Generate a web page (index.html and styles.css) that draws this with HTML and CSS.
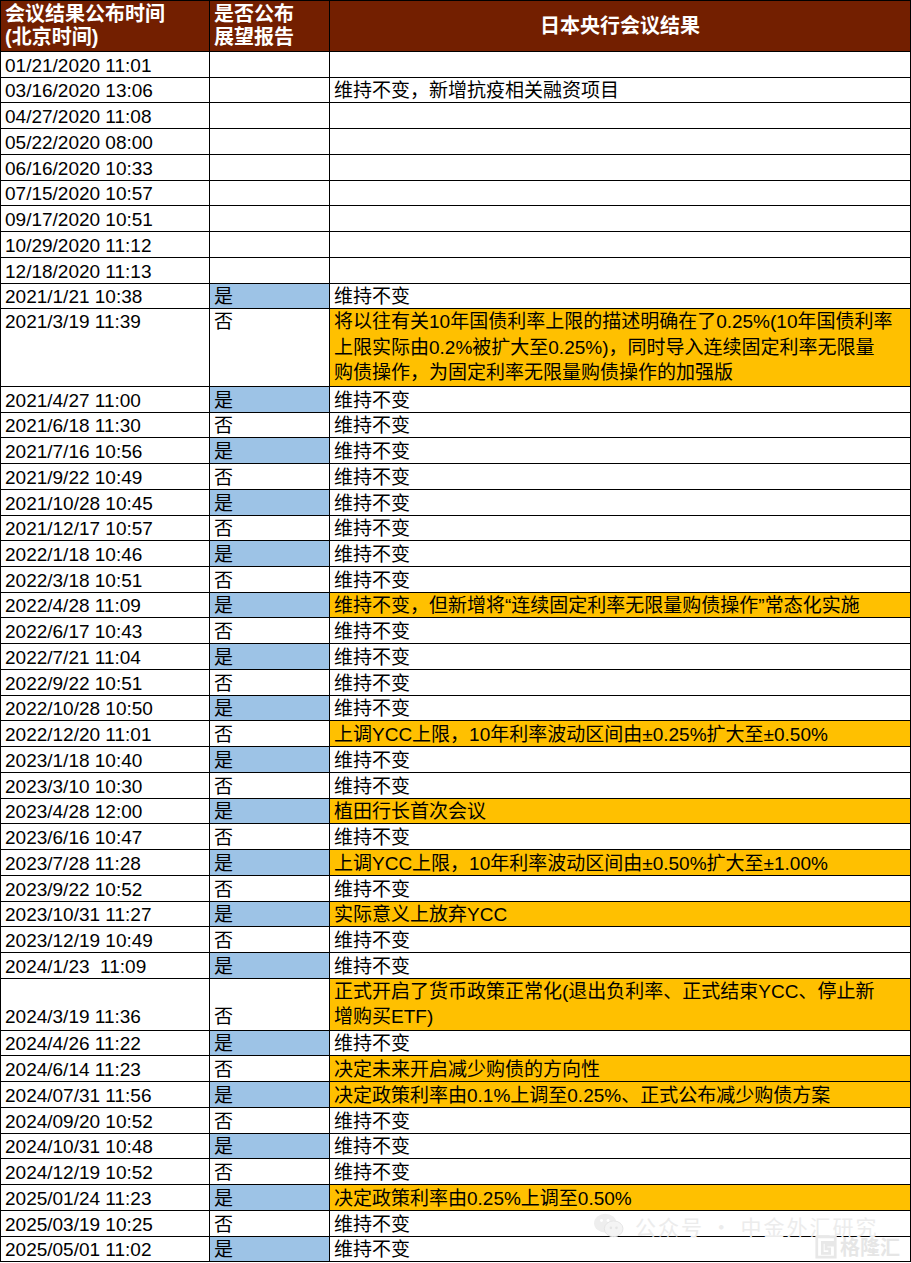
FILE: index.html
```html
<!DOCTYPE html>
<html lang="zh-CN">
<head>
<meta charset="utf-8">
<title>日本央行会议结果</title>
<link rel="stylesheet" href="styles.css">
</head>
<body>
<div class="wrap">
<table class="sheet">
  <colgroup><col class="c1"><col class="c2"><col class="c3"></colgroup>
  <thead>
    <tr class="head">
      <th class="left">会议结果公布时间<br>(北京时间)</th>
      <th class="left">是否公布<br>展望报告</th>
      <th class="center">日本央行会议结果</th>
    </tr>
  </thead>
  <tbody>
    <tr><td>01/21/2020 11:01</td><td></td><td></td></tr>
    <tr><td>03/16/2020 13:06</td><td></td><td>维持不变，新增抗疫相关融资项目</td></tr>
    <tr><td>04/27/2020 11:08</td><td></td><td></td></tr>
    <tr><td>05/22/2020 08:00</td><td></td><td></td></tr>
    <tr><td>06/16/2020 10:33</td><td></td><td></td></tr>
    <tr><td>07/15/2020 10:57</td><td></td><td></td></tr>
    <tr><td>09/17/2020 10:51</td><td></td><td></td></tr>
    <tr><td>10/29/2020 11:12</td><td></td><td></td></tr>
    <tr><td>12/18/2020 11:13</td><td></td><td></td></tr>
    <tr><td>2021/1/21 10:38</td><td class="yes">是</td><td>维持不变</td></tr>
    <tr class="tall3"><td class="top">2021/3/19 11:39</td><td class="top">否</td><td class="hl">将以往有关10年国债利率上限的描述明确在了0.25%(10年国债利率<br>上限实际由0.2%被扩大至0.25%)，同时导入连续固定利率无限量<br>购债操作，为固定利率无限量购债操作的加强版</td></tr>
    <tr><td>2021/4/27 11:00</td><td class="yes">是</td><td>维持不变</td></tr>
    <tr><td>2021/6/18 11:30</td><td>否</td><td>维持不变</td></tr>
    <tr><td>2021/7/16 10:56</td><td class="yes">是</td><td>维持不变</td></tr>
    <tr><td>2021/9/22 10:49</td><td>否</td><td>维持不变</td></tr>
    <tr><td>2021/10/28 10:45</td><td class="yes">是</td><td>维持不变</td></tr>
    <tr><td>2021/12/17 10:57</td><td>否</td><td>维持不变</td></tr>
    <tr><td>2022/1/18 10:46</td><td class="yes">是</td><td>维持不变</td></tr>
    <tr><td>2022/3/18 10:51</td><td>否</td><td>维持不变</td></tr>
    <tr><td>2022/4/28 11:09</td><td class="yes">是</td><td class="hl">维持不变，但新增将“连续固定利率无限量购债操作”常态化实施</td></tr>
    <tr><td>2022/6/17 10:43</td><td>否</td><td>维持不变</td></tr>
    <tr><td>2022/7/21 11:04</td><td class="yes">是</td><td>维持不变</td></tr>
    <tr><td>2022/9/22 10:51</td><td>否</td><td>维持不变</td></tr>
    <tr><td>2022/10/28 10:50</td><td class="yes">是</td><td>维持不变</td></tr>
    <tr><td>2022/12/20 11:01</td><td>否</td><td class="hl">上调YCC上限，10年利率波动区间由±0.25%扩大至±0.50%</td></tr>
    <tr><td>2023/1/18 10:40</td><td class="yes">是</td><td>维持不变</td></tr>
    <tr><td>2023/3/10 10:30</td><td>否</td><td>维持不变</td></tr>
    <tr><td>2023/4/28 12:00</td><td class="yes">是</td><td class="hl">植田行长首次会议</td></tr>
    <tr><td>2023/6/16 10:47</td><td>否</td><td>维持不变</td></tr>
    <tr><td>2023/7/28 11:28</td><td class="yes">是</td><td class="hl">上调YCC上限，10年利率波动区间由±0.50%扩大至±1.00%</td></tr>
    <tr><td>2023/9/22 10:52</td><td>否</td><td>维持不变</td></tr>
    <tr><td>2023/10/31 11:27</td><td class="yes">是</td><td class="hl">实际意义上放弃YCC</td></tr>
    <tr><td>2023/12/19 10:49</td><td>否</td><td>维持不变</td></tr>
    <tr><td>2024/1/23&nbsp; 11:09</td><td class="yes">是</td><td>维持不变</td></tr>
    <tr class="tall2"><td>2024/3/19 11:36</td><td>否</td><td class="hl">正式开启了货币政策正常化(退出负利率、正式结束YCC、停止新<br>增购买ETF)</td></tr>
    <tr><td>2024/4/26 11:22</td><td class="yes">是</td><td>维持不变</td></tr>
    <tr><td>2024/6/14 11:23</td><td>否</td><td class="hl">决定未来开启减少购债的方向性</td></tr>
    <tr><td>2024/07/31 11:56</td><td class="yes">是</td><td class="hl">决定政策利率由0.1%上调至0.25%、正式公布减少购债方案</td></tr>
    <tr><td>2024/09/20 10:52</td><td>否</td><td>维持不变</td></tr>
    <tr><td>2024/10/31 10:48</td><td class="yes">是</td><td>维持不变</td></tr>
    <tr><td>2024/12/19 10:52</td><td>否</td><td>维持不变</td></tr>
    <tr><td>2025/01/24 11:23</td><td class="yes">是</td><td class="hl">决定政策利率由0.25%上调至0.50%</td></tr>
    <tr><td>2025/03/19 10:25</td><td>否</td><td>维持不变</td></tr>
    <tr><td>2025/05/01 11:02</td><td class="yes">是</td><td>维持不变</td></tr>
  </tbody>
</table>
<div class="mark">
  <svg class="wx" width="32" height="28" viewBox="0 0 34 30"><ellipse cx="13" cy="12" rx="12" ry="10" fill="#eeeeee"/><ellipse cx="22" cy="18" rx="10" ry="8.5" fill="#f4f4f4" stroke="#e4e4e4"/><circle cx="9" cy="9" r="1.6" fill="#fff"/><circle cx="16" cy="9" r="1.6" fill="#fff"/><circle cx="19" cy="17" r="1.4" fill="#e4e4e4"/><circle cx="25" cy="17" r="1.4" fill="#e4e4e4"/></svg>
  <span class="mtext">公众号 · 中金外汇研究</span>
</div>
<div class="glh">
  <svg width="24" height="26" viewBox="0 0 26 28"><path d="M3 3 H23 V9 H9 V21 H17 V16 H13 V12 H23 V25 H3 Z" fill="none" stroke="#e8e8e8" stroke-width="3"/></svg>
  <span>格隆汇</span>
</div>
</div>
</body>
</html>
```

FILE: styles.css
```css
html, body {
  margin: 0;
  padding: 0;
  background: #ffffff;
}

.wrap {
  position: relative;
  width: 911px;
}

.sheet {
  border-collapse: collapse;
  table-layout: fixed;
  width: 910px;
  font-family: "Liberation Sans", "Noto Sans CJK SC", sans-serif;
  font-size: 19px;
  color: #000;
}

.c1 { width: 209px; }
.c2 { width: 120px; }
.c3 { width: 581px; }

.sheet th,
.sheet td {
  border: 1px solid #000;
  padding: 0 4px;
  white-space: nowrap;
  overflow: hidden;
}

.head th {
  background: #731f00;
  color: #ffffff;
  font-size: 20px;
  font-weight: bold;
  line-height: 23px;
  height: 50px;
  vertical-align: middle;
}

.head th.left { text-align: left; }
.head th.center { text-align: center; }

.sheet td {
  height: 24.74px;
  line-height: 22px;
  vertical-align: bottom;
  text-align: left;
}

.sheet td.top { vertical-align: top; }

.tall3 td { height: 75.9px; line-height: 25.5px; }
.tall2 td { height: 50.4px; line-height: 25.5px; }

.yes { background: #9dc3e6; }
.hl { background: #ffc000; }

.mark {
  position: absolute;
  left: 593px;
  top: 1212px;
  display: flex;
  align-items: center;
  gap: 10px;
  pointer-events: none;
}

.mtext {
  font-family: "Noto Sans CJK SC", sans-serif;
  font-size: 21px;
  line-height: 26px;
  color: #ececec;
  letter-spacing: 2px;
}

.glh {
  position: absolute;
  left: 814px;
  top: 1234px;
  display: flex;
  align-items: center;
  gap: 2px;
  pointer-events: none;
}

.glh span {
  font-family: "Noto Sans CJK SC", sans-serif;
  font-weight: bold;
  font-size: 20px;
  line-height: 24px;
  color: #e6e6e6;
}
```
